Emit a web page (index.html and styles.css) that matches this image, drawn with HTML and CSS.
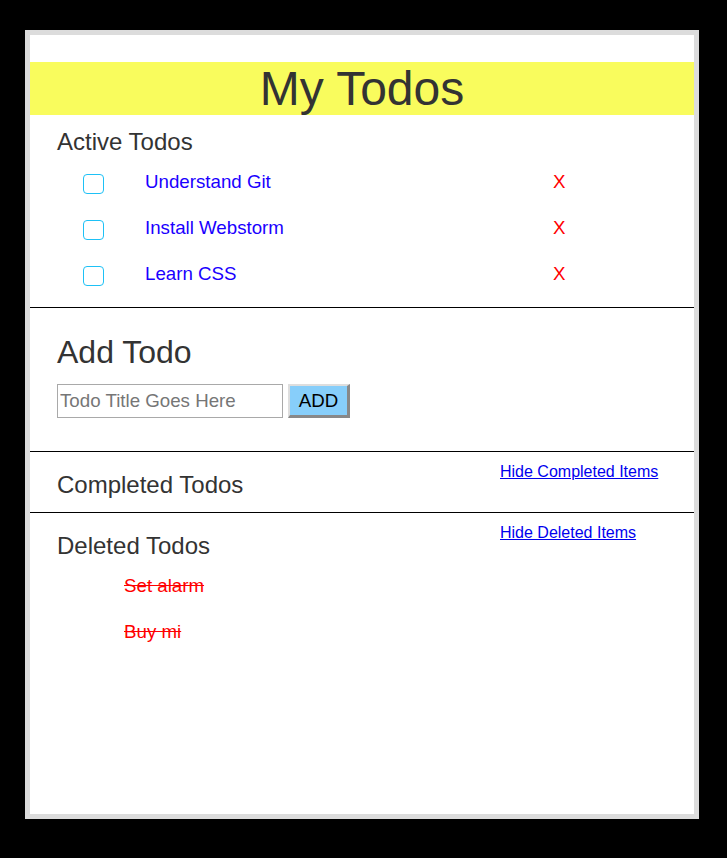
FILE: index.html
```html
<!DOCTYPE html>
<html lang="en">
<head>
<meta charset="utf-8">
<title>My Todos</title>
<link rel="stylesheet" href="styles.css">
</head>
<body>
<div class="frame">
  <header class="banner"><h1 class="title">My Todos</h1></header>

  <section class="section section-active">
    <h2 class="section-title">Active Todos</h2>
    <ul class="todo-list">
      <li class="todo"><input type="checkbox" class="check"><span class="todo-text">Understand Git</span><span class="remove">X</span></li>
      <li class="todo"><input type="checkbox" class="check"><span class="todo-text">Install Webstorm</span><span class="remove">X</span></li>
      <li class="todo"><input type="checkbox" class="check"><span class="todo-text">Learn CSS</span><span class="remove">X</span></li>
    </ul>
  </section>

  <section class="section section-add">
    <h2 class="add-title">Add Todo</h2>
    <form class="add-form">
      <input type="text" class="add-input" placeholder="Todo Title Goes Here">
      <button type="button" class="add-button">ADD</button>
    </form>
  </section>

  <section class="section section-split">
    <h2 class="section-title split-title">Completed Todos</h2>
    <a href="#" class="toggle-link">Hide Completed Items</a>
  </section>

  <section class="section section-split section-deleted">
    <h2 class="section-title split-title">Deleted Todos</h2>
    <a href="#" class="toggle-link">Hide Deleted Items</a>
    <ul class="deleted-list">
      <li class="deleted">Set alarm</li>
      <li class="deleted">Buy mi</li>
    </ul>
  </section>
</div>
</body>
</html>
```

FILE: styles.css
```css
html, body {
  margin: 0;
  padding: 0;
  background: #000;
}

body {
  font-family: "Liberation Sans", Arial, sans-serif;
  color: #333;
}

.frame {
  margin: 30px 0 0 25px;
  width: 664px;
  height: 779px;
  border: 5px solid #dcdcdc;
  background: #fff;
}

.banner {
  margin-top: 27px;
  height: 53px;
  background: #f9fc5d;
}

.title {
  margin: 0;
  font-size: 48px;
  line-height: 53px;
  font-weight: normal;
  text-align: center;
  color: #333;
}

.section {
  padding-left: 27px;
  border-bottom: 1px solid #000;
}

.section-title {
  margin: 0;
  font-size: 24px;
  line-height: 28px;
  font-weight: normal;
  color: #333;
}

.section-active {
  padding-top: 13px;
  padding-bottom: 22px;
}

.todo-list {
  list-style: none;
  margin: 15px 0 0 26px;
  padding: 0;
  display: grid;
  row-gap: 24px;
}

.todo {
  display: grid;
  grid-template-columns: 62px 408px auto;
  height: 22px;
  font-size: 18.72px;
  line-height: 22px;
}

.check {
  appearance: none;
  -webkit-appearance: none;
  margin: 3px 0 0 0;
  width: 21px;
  height: 20px;
  border: 1.5px solid #1ec1f6;
  border-radius: 4px;
  background: #fff;
  box-sizing: border-box;
}

.todo-text {
  color: #1a00ff;
}

.remove {
  color: #ff0000;
}

.section-add {
  padding-top: 26px;
  padding-bottom: 33px;
}

.add-title {
  margin: 0;
  font-size: 32px;
  line-height: 36px;
  font-weight: normal;
  color: #333;
}

.add-form {
  margin-top: 14px;
  display: flex;
  gap: 5px;
}

.add-input {
  box-sizing: border-box;
  width: 226px;
  height: 34px;
  margin: 0;
  padding: 0 2px;
  border: 1px solid #a9a9a9;
  font-family: "Liberation Sans", Arial, sans-serif;
  font-size: 18.72px;
  color: #333;
}

.add-input::placeholder {
  color: #767676;
}

.add-button {
  box-sizing: border-box;
  width: 62px;
  height: 34px;
  margin: 0;
  padding: 0;
  background: #87cefa;
  border-style: solid;
  border-width: 2px 3px 3px 2px;
  border-color: #dedede #888 #888 #dedede;
  font-family: "Liberation Sans", Arial, sans-serif;
  font-size: 18.72px;
  color: #000;
}

.section-split {
  padding-top: 10px;
  padding-bottom: 13px;
  display: grid;
  grid-template-columns: 443px auto;
  align-items: start;
}

.split-title {
  margin-top: 9px;
}

.toggle-link {
  font-size: 16px;
  line-height: 19px;
  color: #0000ee;
  text-decoration: underline;
}

.section-deleted {
  border-bottom: none;
}

.deleted-list {
  grid-column: 1 / -1;
  list-style: none;
  margin: 15px 0 0 67px;
  padding: 0;
  display: grid;
  row-gap: 24px;
}

.deleted {
  font-size: 18.72px;
  line-height: 22px;
  color: #ff0000;
  text-decoration: line-through;
}
```
